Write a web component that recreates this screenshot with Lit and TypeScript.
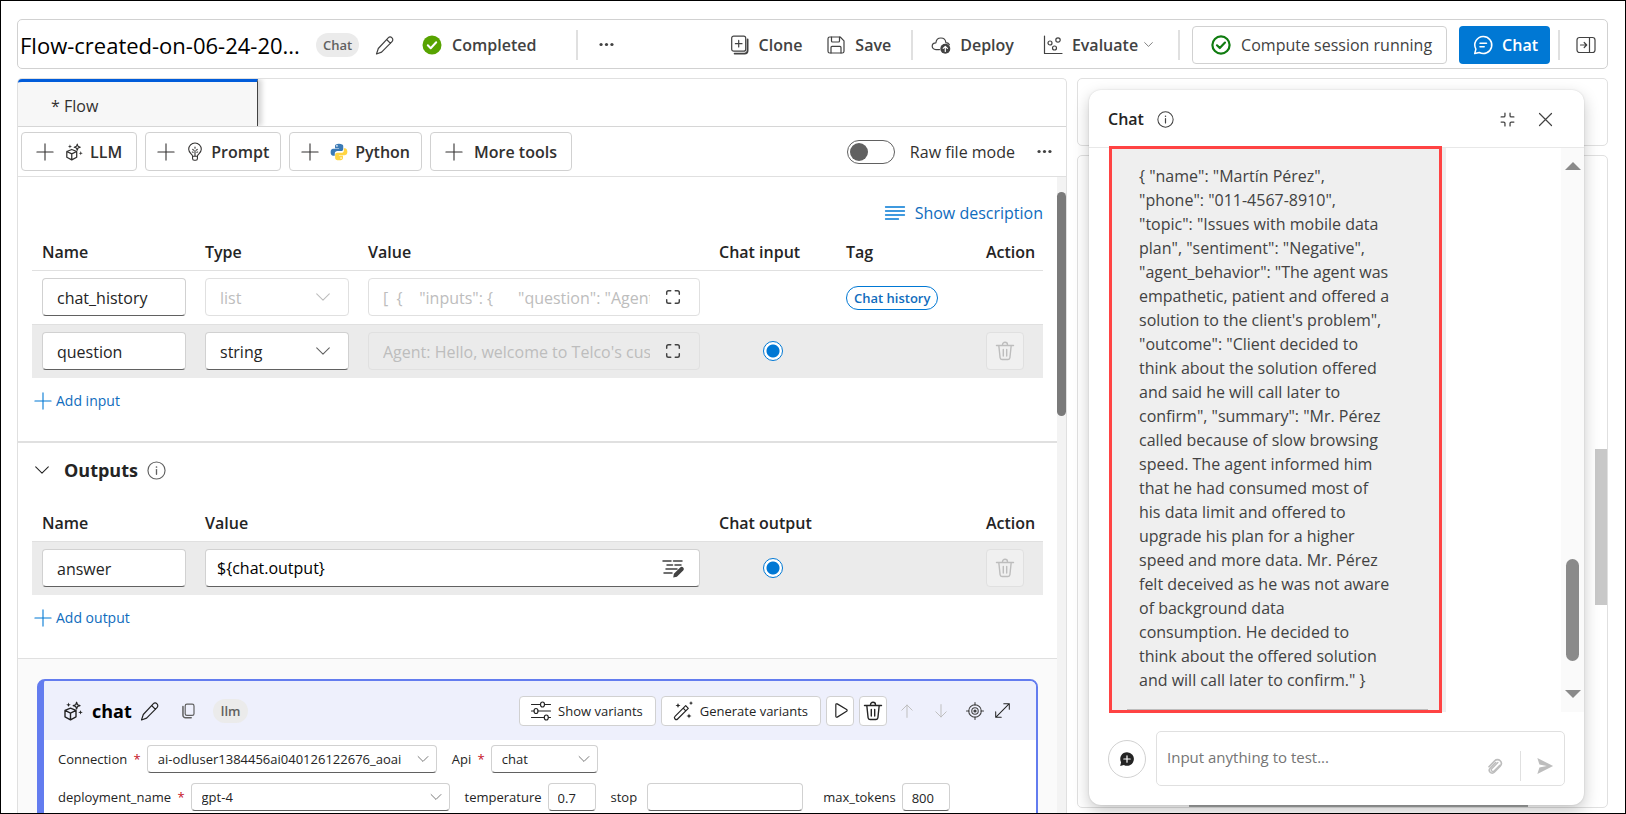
import { LitElement, html, css, svg, nothing, TemplateResult } from "lit";
import { customElement, property } from "lit/decorators.js";

const shapes: Record<string, TemplateResult> = {
  pencil: svg`<path d="M13.2 2.900a2.600 2.600 0 0 1 3.800 3.800L6.600 17.100 1.500 19l1.800-5.500zM11.600 4.500l3.900 3.900"/>`,
  plus: svg`<path d="M10 1v18M1 10h18"/>`,
  clone: svg`<rect x="1.7" y="1.2" width="14" height="15" rx="2"/><path d="M8.7 5.4v6.6M5.4 8.7H12"/><path d="M17.6 4.4v11.2a3 3 0 0 1-3 3H4.6" stroke-width="1.8"/>`,
  save: svg`<path d="M2 3.8C2 2.8 2.8 2 3.8 2h10.4L18 5.8v10.4c0 1-.8 1.8-1.8 1.8H3.8c-1 0-1.8-.8-1.8-1.8z"/><path d="M5.5 2v4c0 .6.4 1 1 1h6c.6 0 1-.4 1-1V2M5 18v-5.6c0-.6.4-1 1-1h8c.6 0 1 .4 1 1V18"/>`,
  deploy: svg`<path d="M8.5 14.6H4.9C2.800 14.600 1.200 13.200 1.200 11.200c0-2 1.600-3.400 3.700-3.400C5.200 4.900 7.100 3 9.900 3s4.700 1.900 5 4.700c1.600 0 2.800.8 3.400 1.900"/><circle cx="14.3" cy="13.800" r="5" fill="currentColor" stroke="none"/><path d="M14.300 16.500v-5M12.200 13.400l2.100-2.100 2.100 2.100" stroke="#fff"/>`,
  scatter: svg`<path d="M1.500 1v17.500H19"/><circle cx="7" cy="8" r="2"/><circle cx="15" cy="5" r="2.200"/><circle cx="11.500" cy="13" r="2"/>`,
  chevron: svg`<path d="M3 6.500l7 7 7-7"/>`,
  doneFill: svg`<circle cx="10" cy="10" r="9.500" fill="currentColor" stroke="none"/><path d="M5.800 10.300l2.900 2.900 5.500-6" stroke="#fff" stroke-width="2"/>`,
  doneRing: svg`<circle cx="10" cy="10" r="8.600" stroke-width="2.200"/><path d="M6 10.300l2.800 2.700 5.200-5.400" stroke-width="2.200"/>`,
  chat: svg`<path d="M10.200 1.500a8.500 8.500 0 1 1-3.900 16l-4.600 1.100 1.200-4.500a8.500 8.500 0 0 1 7.300-12.600z" stroke-width="1.500"/><path d="M7 8.200h6.500M7 11.700h4.200" stroke-width="1.500"/>`,
  collapsePanel: svg`<rect x="1" y="2.500" width="18" height="15" rx="2.500"/><path d="M13.500 2.500v15M4.500 10h6M8.200 7.500l2.500 2.500-2.500 2.500"/>`,
  more: svg`<g fill="currentColor" stroke="none"><circle cx="3.600" cy="10" r="1.900"/><circle cx="10" cy="10" r="1.900"/><circle cx="16.400" cy="10" r="1.900"/></g>`,
  cube: svg`<path d="M7.500 7.200l5.500 2.200v6.400l-5.500 3-5.500-3V9.400zM2 9.400l5.500 2.700L13 9.400M7.500 12.100v6.700" stroke-width="1.400"/><path d="M13.600 1.200l.9 2.500 2.500.9-2.500.9-.9 2.500-.9-2.500-2.500-.9 2.500-.9z"/><g fill="currentColor" stroke="none"><path d="M5.500 1.500l.6 1.700 1.700.6-1.700.6-.6 1.700-.6-1.700-1.700-.6 1.700-.6zM17.500 9l.6 1.700 1.700.6-1.700.6-.6 1.700-.6-1.700-1.700-.6 1.700-.6z"/></g>`,
  bulb: svg`<path d="M7.300 14.500C6.900 12.400 3 11 3 7a7 7 0 0 1 14 0c0 4-3.900 5.400-4.300 7.500v2.700c0 1.100-.8 2-1.900 2H9.200c-1.100 0-1.900-.9-1.900-2zM7.300 14.800h5.400M10 8.200v6.300M7.500 7l.8 1M12.500 7l-.8 1M10 4.500v1.200M7 10l1 .3M13 10l-1 .3"/>`,
  python: svg`<g stroke="none"><path fill="#3b7ab5" d="M9.900.8c-3 0-4.300 1-4.300 2.600v2.300h4.500v.8H3.500C1.600 6.500.7 8 .7 10.200s1 3.900 2.800 3.900h1.800v-2.500c0-1.600 1.300-2.700 2.900-2.700h4.300c1.300 0 2.200-1 2.200-2.300V3.400C14.700 1.800 13 .8 9.900.8z"/><circle cx="7.700" cy="3.200" r=".9" fill="#fff"/><path fill="#ffd542" d="M10.100 19.200c3 0 4.300-1 4.300-2.600v-2.300H9.900v-.8h6.600c1.900 0 2.800-1.500 2.800-3.700s-1-3.900-2.800-3.900h-1.100v2.300c0 1.600-1.300 2.700-2.900 2.700H7.900c-1.300 0-2.200 1-2.200 2.300v3.400c0 1.600 1.400 2.600 4.400 2.600z"/><circle cx="12.300" cy="16.800" r=".9" fill="#fff"/></g>`,
  lines: svg`<path d="M.5 4h19M.5 8h19M.5 12h19M.5 16h13" stroke-width="1.300"/>`,
  expand: svg`<path d="M3 7V5c0-1.100.9-2 2-2h2.500M12.500 3H15c1.100 0 2 .9 2 2v2M17 13v2c0 1.100-.9 2-2 2h-2.500M7.500 17H5c-1.100 0-2-.9-2-2v-2" stroke-width="1.600"/>`,
  shrink: svg`<path d="M7 2.500v3c0 .8-.7 1.500-1.500 1.500h-3M13 2.500v3c0 .8.700 1.500 1.500 1.500h3M7 17.500v-3c0-.8-.7-1.500-1.500-1.500h-3M13 17.500v-3c0-.8.700-1.500 1.500-1.500h3" stroke-width="1.500"/>`,
  trash: svg`<path d="M1.500 4.500h17M7.500 4.500V3.700a2.500 2.500 0 0 1 5 0v.8M3.800 4.500l1.300 12.300c.1 1 .9 1.700 1.900 1.700h6c1 0 1.800-.7 1.900-1.700l1.300-12.300M8.300 8.500v6.500M11.700 8.500v6.500" stroke-width="1.400"/>`,
  info: svg`<circle cx="10" cy="10" r="9"/><path d="M10 9v5" stroke-width="1.400"/><circle cx="10" cy="6.300" r=".9" fill="currentColor" stroke="none"/>`,
  close: svg`<path d="M2 2l16 16M18 2L2 18" stroke-width="1.600"/>`,
  editLines: svg`<path d="M0 3h8M10.500 3H19M4 7h5.500M12 7h6M3 11h11M1 15h8" stroke-width="1.500"/><path d="M10.200 19.500l.7-3.700 6.300-6.300a2.100 2.100 0 0 1 3 3l-6.300 6.300z" fill="currentColor" stroke="none"/>`,
  copy: svg`<rect x="6.500" y="1.500" width="11" height="14" rx="2.200" stroke-width="1.500"/><path d="M3.700 4.500v10.700a3.300 3.300 0 0 0 3.300 3.300h7" stroke-width="1.900"/>`,
  sliders: svg`<path d="M.5 3.500h9M13.500 3.500h6M.5 10H3M7 10h12.500M.5 16.500H13M17.500 16.500h2"/><ellipse cx="11.500" cy="3.500" rx="2" ry="2.500"/><ellipse cx="5" cy="10" rx="2" ry="2.500"/><ellipse cx="15.300" cy="16.500" rx="2" ry="2.500"/>`,
  wand: svg`<path d="M12.700 4.700l2.600 2.600L4.600 18a1.800 1.800 0 0 1-2.600-2.600zM10.200 7.200l2.600 2.600"/><g fill="currentColor" stroke="none"><path d="M5 2l.7 1.800 1.800.7-1.800.7L5 7l-.7-1.800-1.800-.7 1.800-.7zM18 0l.6 1.500 1.400.6-1.400.6L18 4.200l-.6-1.500L16 2.100l1.400-.6zM16 12.500l.7 1.800 1.800.7-1.800.7-.7 1.800-.7-1.800-1.800-.7 1.800-.7z"/></g>`,
  play: svg`<path d="M4.500 3.200c0-.9.900-1.400 1.700-1l11 6.700c.8.500.8 1.600 0 2.100l-11 6.800c-.8.400-1.700-.1-1.700-1z" stroke-width="1.400"/>`,
  up: svg`<path d="M10 18V2.500M3.500 9L10 2.500 16.500 9"/>`,
  down: svg`<path d="M10 2v15.500M3.500 11l6.500 6.500 6.500-6.500"/>`,
  target: svg`<circle cx="10" cy="10" r="7"/><circle cx="10" cy="10" r="3.600"/><circle cx="10" cy="10" r="1.800" fill="currentColor" stroke="none"/><path d="M10 .5v3M10 16.500v3M.5 10h3M16.500 10h3"/>`,
  diagonal: svg`<path d="M2 18L18 2M11.500 2H18v6.500M8.500 18H2v-6.500"/>`,
  chatAdd: svg`<path d="M10 1.500a8.500 8.500 0 1 1-3.900 16L1.500 18.600l1.100-4.500A8.500 8.500 0 0 1 10 1.500z" fill="currentColor" stroke="none"/><path d="M10 6v8M6 10h8" stroke="#fff" stroke-width="1.500"/>`,
  clip: svg`<path d="M15 8.500l-6.700 6.800a1.900 1.900 0 0 1-2.700-2.700l7.200-7.200" stroke-width="1.600"/><path d="M2.300 10.300l6.800-7a4.400 4.400 0 0 1 6.400 0c1.700 1.800 1.700 4.500 0 6.300l-7 7.200a3.300 3.300 0 0 1-4.800 0 3.400 3.400 0 0 1 0-4.700l6.600-6.800" stroke-width="1.900"/>`,
  send: svg`<path d="M1.500 1l17.500 9-17.500 9 2.300-7.400 8.200-1.600-8.200-1.600z" fill="currentColor" stroke="none"/>`,
};

const icon = (name: string, size = 20) => html`<svg
  width=${size} height=${size} viewBox="0 0 20 20" fill="none" stroke="currentColor"
  stroke-width="1.2" stroke-linecap="round" stroke-linejoin="round" aria-hidden="true"
>${shapes[name]}</svg>`;

const shared = css`
  * { box-sizing: border-box; }
  svg { display: block; flex: none; overflow: visible; }
  button, input, select, textarea { font: inherit; color: inherit; margin: 0; }
  button { display: flex; align-items: center; padding: 0; border: 0; background: none; white-space: nowrap; }
  .field { display: flex; align-items: center; height: 38px; border: 1px solid #d1d1d1; border-bottom-color: #616161; border-radius: 4px; background: #fff; color: #242424; }
  .field.off { border-color: #e0e0e0; color: #bdbdbd; background: transparent; }
  .field input { flex: 1; width: 100%; min-width: 0; border: 0; outline: 0; padding: 1px 0 0 14px; background: none; opacity: 1; }
  .pick { display: grid; align-items: center; }
  .pick select { grid-area: 1 / 1; width: 100%; height: 100%; min-width: 0; appearance: none; border: 0; outline: 0; padding: 1px 14px 0; background: none; opacity: 1; }
  .pick svg { grid-area: 1 / 1; justify-self: end; margin-right: 16px; pointer-events: none; color: #616161; }
  .pick.off svg { color: #bdbdbd; }
  .small { height: 28px; }
  .small input { padding: 1px 0 0 9px; }
  .small select { padding: 0 10px; }
  .small svg { margin-right: 6px; }
`;

@customElement("flow-header")
class FlowHeader extends LitElement {
  static styles = [shared, css`
    :host { display: block; }
    .bar { display: flex; align-items: center; height: 50px; padding-top: 1px; border: 1px solid #d1d1d1; border-radius: 5px; background: #fff; color: #424242; font-weight: 600; }
    h1 { margin: 0 16px 0 2px; font-size: 22px; line-height: 30px; font-weight: 400; color: #000; white-space: nowrap; }
    .chip { height: 24px; padding: 0 7px; border-radius: 12px; background: #ebebeb; color: #616161; font-size: 13px; line-height: 24px; }
    .edit { margin: 0 27px 0 16px; }
    .state { display: flex; align-items: center; gap: 10px; }
    .state svg { color: #57a300; }
    .rule { width: 2px; height: 30px; background: #e0e0e0; flex: none; }
    .after-state { margin: 0 20px 0 40px; }
    .actions { display: flex; align-items: center; margin-left: auto; }
    .actions button { gap: 9px; }
    .menu { display: flex; align-items: center; gap: 5px; }
    .actions .session { height: 38px; gap: 10px; border: 1px solid #d1d1d1; border-radius: 4px; padding: 0 14px 0 18px; font-weight: 400; }
    .session svg { color: #107c10; }
    .primary { height: 38px; border-radius: 4px; padding: 0 12px 0 14px; background: #0078d4; color: #fff; margin: 0 8px 0 12px; }
    .g1 { margin-right: 24px; }
    .g2 { margin: 0 18px 0 20px; }
    .g3 { margin-right: 29px; }
    .g4 { margin: 0 12px 0 24px; }
    .side { margin: 0 11px 0 16px; }
  `];
  render() {
    return html`<header class="bar">
      <h1>Flow-created-on-06-24-20...</h1>
      <span class="chip">Chat</span>
      <button class="edit" aria-label="Rename flow">${icon("pencil")}</button>
      <span class="state">${icon("doneFill")}Completed</span>
      <span class="rule after-state"></span>
      <button aria-label="More options">${icon("more", 17)}</button>
      <div class="actions">
        <button class="g1">${icon("clone")}Clone</button>
        <button>${icon("save")}Save</button>
        <span class="rule g2"></span>
        <button class="g3">${icon("deploy")}Deploy</button>
        <button>${icon("scatter")}<span class="menu">Evaluate${icon("chevron", 11)}</span></button>
        <span class="rule g4"></span>
        <button class="session">${icon("doneRing")}Compute session running</button>
        <button class="primary">${icon("chat")}Chat</button>
        <span class="rule"></span>
        <button class="side" aria-label="Collapse panel">${icon("collapsePanel")}</button>
      </div>
    </header>`;
  }
}

@customElement("flow-io")
class FlowIo extends LitElement {
  static styles = [shared, css`
    :host { display: block; }
    section { padding: 24px 14px 28px; border-bottom: 2px solid #e0e0e0; }
    section.outputs { padding-top: 15px; border-bottom-width: 1px; }
    .describe { margin: 0 0 9px auto; height: 24px; gap: 10px; color: #0f6cbd; }
    .describe svg { color: #0078d4; }
    table { width: 100%; table-layout: fixed; border-collapse: collapse; }
    th { height: 36px; padding: 0 10px; text-align: left; font-weight: 600; color: #242424; white-space: nowrap; }
    td { height: 54px; padding: 0 9px 0 10px; border-top: 1px solid #e0e0e0; }
    .shade td { background: #ebebeb; }
    .name { width: 163px; }
    .radio { width: 127px; }
    .tag { width: 140px; }
    .act { width: 67px; }
    .field button { margin: 0 17px 0 14px; color: #424242; }
    .field .editor { padding: 0 11px; color: #000; }
    .field .write { margin-right: 16px; }
    input[type="radio"] { appearance: none; display: block; width: 20px; height: 20px; margin: 0 auto; border: 1px solid #0078d4; border-radius: 50%; background: radial-gradient(circle, #0078d4 6px, #fff 7px); }
    .badge { display: inline-block; height: 24px; padding: 0 7px; border: 1px solid #0078d4; border-radius: 12px; color: #0f6cbd; background: #fff; font-size: 13px; line-height: 22px; font-weight: 600; white-space: nowrap; }
    .trash { justify-content: center; width: 38px; height: 38px; border: 1px solid #e0e0e0; border-radius: 4px; background: #f0f0f0; color: #bdbdbd; }
    .add { margin-top: 11px; height: 24px; gap: 4px; padding-left: 2px; font-size: 14px; color: #0f6cbd; }
    .add svg { color: #0078d4; }
    .head { display: flex; align-items: center; height: 24px; margin-bottom: 23px; padding-left: 1px; color: #242424; }
    .head h2 { margin: 0 9px 0 13px; font-size: 18px; line-height: 24px; font-weight: 700; }
    .head .info { color: #616161; }
  `];
  private radio(label: string) {
    return html`<input type="radio" aria-label=${label} checked>`;
  }
  private trash() {
    return html`<button class="trash" aria-label="Delete" disabled>${icon("trash")}</button>`;
  }
  private inputRow(name: string, type: string, value: string, chat: boolean) {
    return html`<tr class=${chat ? "shade" : ""}>
      <td><div class="field"><input aria-label="Name" .value=${name}></div></td>
      <td><div class="field pick ${chat ? "" : "off"}"><select aria-label="Type" ?disabled=${!chat}><option>${type}</option></select>${icon("chevron", 18)}</div></td>
      <td><div class="field off"><input aria-label="Value" disabled .value=${value}><button aria-label="Expand value">${icon("expand", 18)}</button></div></td>
      <td>${chat ? this.radio("Chat input") : nothing}</td>
      <td>${chat ? nothing : html`<span class="badge">Chat history</span>`}</td>
      <td>${chat ? this.trash() : nothing}</td>
    </tr>`;
  }
  render() {
    return html`
      <section>
        <button class="describe">${icon("lines")}Show description</button>
        <table>
          <thead><tr><th class="name">Name</th><th class="name">Type</th><th>Value</th><th class="radio">Chat input</th><th class="tag">Tag</th><th class="act">Action</th></tr></thead>
          <tbody>
            ${this.inputRow("chat_history", "list", '[  {    "inputs": {      "question": "Agent: Hello', false)}
            ${this.inputRow("question", "string", "Agent: Hello, welcome to Telco's customer service", true)}
          </tbody>
        </table>
        <button class="add">${icon("plus", 18)}Add input</button>
      </section>
      <section class="outputs">
        <div class="head">
          <button aria-label="Collapse outputs">${icon("chevron", 18)}</button>
          <h2>Outputs</h2><span class="info">${icon("info", 19)}</span>
        </div>
        <table>
          <thead><tr><th class="name">Name</th><th>Value</th><th class="radio">Chat output</th><th class="tag"></th><th class="act">Action</th></tr></thead>
          <tbody><tr class="shade">
            <td><div class="field"><input aria-label="Name" .value=${"answer"}></div></td>
            <td><div class="field"><input class="editor" aria-label="Value" .value=${"${chat.output}"}><button class="write" aria-label="Edit value">${icon("editLines")}</button></div></td>
            <td>${this.radio("Chat output")}</td><td></td><td>${this.trash()}</td>
          </tr></tbody>
        </table>
        <button class="add">${icon("plus", 18)}Add output</button>
      </section>`;
  }
}

@customElement("flow-node")
class FlowNode extends LitElement {
  static styles = [shared, css`
    :host { display: block; font-size: 13px; }
    .card { border: 2px solid #637cef; border-left-width: 7px; border-radius: 8px; background: #fff; overflow: hidden; }
    .head { display: flex; align-items: center; height: 59px; padding: 0 25px 0 19px; background: #eef0fc; color: #242424; }
    h3 { margin: 0 8px 0 9px; font-size: 18px; line-height: 26px; font-weight: 700; color: #000; }
    .copy { margin: 0 17px 0 20px; color: #616161; }
    .pill { height: 24px; padding: 0 8px; border-radius: 12px; background: #ebebeb; color: #616161; line-height: 24px; font-weight: 600; }
    .tools { display: flex; align-items: center; gap: 5px; margin-left: auto; }
    .box { height: 30px; gap: 7px; padding: 0 12px 0 11px; border: 1px solid #d1d1d1; border-radius: 4px; background: #fff; }
    .square { justify-content: center; width: 28px; height: 30px; border: 1px solid #d1d1d1; border-radius: 4px; background: #fff; }
    .plain { justify-content: center; width: 29px; height: 30px; color: #424242; }
    .plain:disabled { color: #bdbdbd; }
    .form { display: grid; gap: 10px; padding: 5px 14px 40px; color: #242424; }
    .line { display: flex; align-items: center; gap: 6px; white-space: nowrap; }
    .pair { display: flex; align-items: center; gap: 6px; margin-right: 9px; }
    .req::after { content: " *"; margin-left: 3px; color: #c50f1f; }
    .w1 { width: 290px; } .w2 { width: 107px; } .w3 { width: 259px; }
    .w4 { width: 48px; } .w5 { width: 156px; }
    .stop { gap: 10px; margin-right: 14px; }
  `];
  render() {
    return html`<article class="card">
      <div class="head">
        ${icon("cube")}<h3>chat</h3>
        <button aria-label="Rename node">${icon("pencil")}</button>
        <button class="copy" aria-label="Copy node">${icon("copy", 16)}</button>
        <span class="pill">llm</span>
        <div class="tools">
          <button class="box">${icon("sliders")}Show variants</button>
          <button class="box">${icon("wand")}Generate variants</button>
          <button class="square" aria-label="Run">${icon("play", 17)}</button>
          <button class="square" aria-label="Delete">${icon("trash")}</button>
          <button class="plain" aria-label="Move up" disabled>${icon("up", 16)}</button>
          <button class="plain" aria-label="Move down" disabled>${icon("down", 16)}</button>
          <button class="plain" aria-label="Locate">${icon("target", 18)}</button>
          <button aria-label="Expand">${icon("diagonal", 17)}</button>
        </div>
      </div>
      <div class="form">
        <div class="line">
          <div class="pair"><label class="req" for="conn">Connection</label>
            <div class="field pick small w1"><select id="conn"><option>ai-odluser1384456ai040126122676_aoai</option></select>${icon("chevron", 14)}</div></div>
          <div class="pair"><label class="req" for="api">Api</label>
            <div class="field pick small w2"><select id="api"><option>chat</option></select>${icon("chevron", 14)}</div></div>
        </div>
        <div class="line">
          <div class="pair"><label class="req" for="dep">deployment_name</label>
            <div class="field pick small w3"><select id="dep"><option>gpt-4</option></select>${icon("chevron", 14)}</div></div>
          <div class="pair"><label for="temp">temperature</label><div class="field small w4"><input id="temp" .value=${"0.7"}></div></div>
          <div class="pair stop"><label for="stop">stop</label><div class="field small w5"><input id="stop"></div></div>
          <div class="pair"><label for="max">max_tokens</label><div class="field small w4"><input id="max" .value=${"800"}></div></div>
        </div>
      </div>
    </article>`;
  }
}

@customElement("chat-pane")
class ChatPane extends LitElement {
  static styles = [shared, css`
    :host { display: flex; flex-direction: column; border-radius: 12px; background: #fff; color: #424242; box-shadow: 0 0 2px rgba(0,0,0,.14), 0 6px 16px rgba(0,0,0,.22); overflow: hidden; }
    header { display: flex; align-items: center; height: 58px; padding: 1px 31px 0 19px; border-bottom: 1px solid #e8e8e8; flex: none; color: #424242; }
    h2 { margin: 0 13px 0 0; font-size: 16px; line-height: 24px; font-weight: 600; color: #242424; }
    header button { margin-left: 22px; }
    header .first { margin-left: auto; }
    .list { flex: 1; min-height: 0; display: flex; }
    .messages { flex: 1; padding-left: 20px; }
    .bubble { position: relative; width: 337px; height: 100%; padding: 16px 18px 0; background: #efefef; }
    .bubble p { margin: 0; padding: 0 12px 17px; line-height: 24px; white-space: pre; border-bottom: 1px solid #bdbdbd; }
    .mark { position: absolute; inset: -2px 4px -1px 0; border: 3px solid #ff4343; pointer-events: none; }
    .track { display: flex; flex-direction: column; align-items: center; width: 23px; padding: 14px 0; background: #fafafa; }
    .up, .down { width: 16px; border: 8px solid transparent; }
    .up { border-top: 0; border-bottom-color: #8a8a8a; }
    .down { border-bottom: 0; border-top-color: #8a8a8a; margin-top: 29px; }
    .thumb { width: 13px; height: 102px; margin-top: auto; border-radius: 7px; background: #8a8a8a; }
    footer { display: flex; align-items: center; gap: 10px; padding: 19px; flex: none; }
    .new { justify-content: center; width: 38px; height: 38px; border: 1px solid #d1d1d1; border-radius: 50%; color: #242424; flex: none; }
    .compose { flex: 1; display: flex; height: 55px; align-items: flex-end; border: 1px solid #e0e0e0; border-radius: 5px; color: #bdbdbd; padding: 0 10px 4px; }
    textarea { flex: 1; align-self: center; height: 24px; min-width: 0; padding: 0; border: 0; outline: 0; resize: none; background: none; font-size: 15px; line-height: 24px; overflow: hidden; }
    textarea::placeholder { color: #757575; opacity: 1; }
    .compose button { height: 30px; }
    .split { width: 1px; height: 30px; margin: 0 15px 0 16px; background: #e0e0e0; }
  `];
  @property({ attribute: false }) lines: string[] = [];
  render() {
    return html`
      <header><h2>Chat</h2>${icon("info", 17)}
        <button class="first" aria-label="Shrink">${icon("shrink", 17)}</button>
        <button aria-label="Close">${icon("close", 15)}</button>
      </header>
      <div class="list">
        <div class="messages"><div class="bubble"><p>${this.lines.join("\n")}</p><div class="mark"></div></div></div>
        <div class="track"><i class="up"></i><i class="thumb"></i><i class="down"></i></div>
      </div>
      <footer>
        <button class="new" aria-label="New chat">${icon("chatAdd", 16)}</button>
        <div class="compose">
          <textarea aria-label="Message" placeholder="Input anything to test..." rows="1"></textarea>
          <button aria-label="Attach">${icon("clip", 17)}</button><span class="split"></span>
          <button aria-label="Send">${icon("send", 18)}</button>
        </div>
      </footer>`;
  }
}

const reply = [
  '{ "name": "Martín Pérez",',
  '"phone": "011-4567-8910",',
  '"topic": "Issues with mobile data',
  'plan", "sentiment": "Negative",',
  '"agent_behavior": "The agent was',
  "empathetic, patient and offered a",
  "solution to the client's problem\",",
  '"outcome": "Client decided to',
  "think about the solution offered",
  "and said he will call later to",
  'confirm", "summary": "Mr. Pérez',
  "called because of slow browsing",
  "speed. The agent informed him",
  "that he had consumed most of",
  "his data limit and offered to",
  "upgrade his plan for a higher",
  "speed and more data. Mr. Pérez",
  "felt deceived as he was not aware",
  "of background data",
  "consumption. He decided to",
  "think about the offered solution",
  'and will call later to confirm." }',
];

@customElement("app-root")
class AppRoot extends LitElement {
  static styles = [shared, css`
    :host { display: flex; flex-direction: column; box-sizing: border-box; height: 100vh; overflow: hidden; padding: 18px 17px 0 16px; border: 1px solid #000; background: #fff; color: #323130; font-family: "Open Sans", "Noto Sans", sans-serif; font-size: 16px; line-height: 24px; }
    .cols { flex: 1; min-height: 0; display: grid; grid-template-columns: 1050fr 531fr; gap: 10px; margin-top: 9px; }
    .left { display: flex; flex-direction: column; min-width: 0; min-height: 0; border: 1px solid #e0e0e0; border-bottom: 0; border-radius: 5px 5px 0 0; }
    .tabs { display: flex; height: 48px; border-bottom: 1px solid #d6d6d6; flex: none; }
    .tab { width: 240px; padding: 3px 33px 0; border-top: 3px solid #015cda; border-right: 1px solid #424242; border-radius: 4px 0 0 0; background: #f7f7f7; box-shadow: 4px 0 5px rgba(0,0,0,.16); clip-path: inset(0 -9px 0 0); }
    .tools { display: flex; align-items: center; gap: 8px; height: 50px; padding: 0 13px 0 3px; border-bottom: 1px solid #e0e0e0; flex: none; }
    .tool { height: 39px; gap: 7px; padding: 0 11px; border: 1px solid #d1d1d1; border-radius: 4px; font-weight: 600; color: #323130; }
    .tool.wide { padding: 0 14px; }
    .tool svg:first-child { margin-right: 4px; }
    .raw { display: flex; align-items: center; gap: 15px; margin-left: auto; }
    .raw input { appearance: none; display: grid; align-items: center; width: 48px; height: 24px; margin: 0; padding-left: 2px; border: 1px solid #616161; border-radius: 12px; background: #fff; }
    .raw input::before { content: ""; width: 18px; height: 18px; border-radius: 50%; background: #616161; }
    .dots { margin-left: 13px; color: #424242; }
    .scroll { flex: 1; min-height: 0; display: flex; }
    .content { flex: 1; min-width: 0; height: 100%; overflow: hidden; }
    .nodes { padding: 20px 19px; background: #fafafa; }
    .bar { width: 9px; padding-top: 15px; background: #f3f3f3; }
    .bar i { display: block; height: 36%; border-radius: 5px; background: #7a7a7a; }
    .right { position: relative; display: flex; flex-direction: column; gap: 9px; padding-bottom: 5px; min-height: 0; }
    .panel { border: 1px solid #e0e0e0; border-radius: 5px; height: 68px; flex: none; }
    .panel.graph { position: relative; flex: 1; height: auto; }
    .vthumb { position: absolute; right: 0; top: 45%; width: 12px; height: 24%; background: #c8c8c8; }
    .hthumb { position: absolute; left: 21%; bottom: 0; width: 64%; height: 3px; background: #a3a5a4; }
    chat-pane { position: absolute; inset: 12px 24px 8px 12px; }
  `];
  render() {
    return html`
      <flow-header></flow-header>
      <main class="cols">
        <div class="left">
          <div class="tabs"><button class="tab">* Flow</button></div>
          <div class="tools">
            <button class="tool wide">${icon("plus", 18)}${icon("cube", 18)}LLM</button>
            <button class="tool">${icon("plus", 18)}${icon("bulb", 18)}Prompt</button>
            <button class="tool">${icon("plus", 18)}${icon("python", 18)}Python</button>
            <button class="tool wide">${icon("plus", 18)}More tools</button>
            <label class="raw"><input type="checkbox" role="switch">Raw file mode</label>
            <button class="dots" aria-label="More">${icon("more", 17)}</button>
          </div>
          <div class="scroll">
            <div class="content">
              <flow-io></flow-io>
              <div class="nodes"><flow-node></flow-node></div>
            </div>
            <div class="bar"><i></i></div>
          </div>
        </div>
        <div class="right">
          <div class="panel"></div>
          <div class="panel graph"><i class="vthumb"></i><i class="hthumb"></i></div>
          <chat-pane .lines=${reply}></chat-pane>
        </div>
      </main>`;
  }
}
